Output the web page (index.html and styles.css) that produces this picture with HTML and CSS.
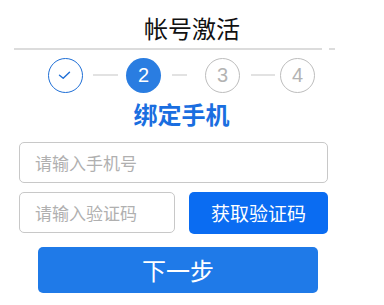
FILE: index.html
```html
<!DOCTYPE html>
<html lang="zh">
<head>
<meta charset="utf-8">
<link rel="stylesheet" href="styles.css">
</head>
<body>
<div class="page">
  <h1 class="title">帐号激活</h1>
  <div class="divider"><span class="rule"></span><span class="dash"></span></div>
  <div class="steps">
    <div class="step done">
      <svg class="check" width="35" height="35" viewBox="0 0 35 35"><polyline points="11.5,18.3 15.2,21.3 21.5,15.2" fill="none" stroke="#1f6fd6" stroke-width="1.4" stroke-linecap="round" stroke-linejoin="round"/></svg>
    </div>
    <div class="link l1"><span></span></div>
    <div class="step active">2</div>
    <div class="link l2"><span></span></div>
    <div class="step todo">3</div>
    <div class="link l3"><span></span></div>
    <div class="step todo">4</div>
  </div>
  <h2 class="subtitle">绑定手机</h2>
  <form class="form">
    <input class="field" type="text" placeholder="请输入手机号">
    <div class="row">
      <input class="field code" type="text" placeholder="请输入验证码">
      <button class="btn-code" type="button">获取验证码</button>
    </div>
    <button class="btn-next" type="button">下一步</button>
  </form>
</div>
</body>
</html>
```
FILE: styles.css
```css
* { box-sizing: border-box; }
html, body { margin: 0; padding: 0; background: #fff; }
body {
  font-family: "Noto Sans CJK SC", "Noto Sans", sans-serif;
  width: 384px;
  height: 305px;
  overflow: hidden;
}
.page { padding-top: 11px; }
.title {
  margin: 0;
  font-size: 24px;
  line-height: 34px;
  font-weight: 400;
  color: #111;
  text-align: center;
}
.divider {
  display: flex;
  margin-top: 3px;
  padding-left: 14px;
  gap: 7px;
  height: 1.5px;
}
.divider .rule { width: 308px; background: #dcdcdc; }
.divider .dash { width: 6px; background: #dcdcdc; }
.steps {
  display: flex;
  align-items: center;
  margin-top: 8px;
  padding-left: 48px;
  height: 35px;
}
.step {
  width: 35px;
  height: 35px;
  border-radius: 50%;
  display: flex;
  align-items: center;
  justify-content: center;
  font-family: "Liberation Sans", Arial, sans-serif;
  font-size: 20px;
  flex: none;
  position: relative;
}
.step.done { border: 1.3px solid #1f6fd6; }
.step.done .check { position: absolute; left: -1.3px; top: -1.3px; }
.step.active { background: #2a7de1; color: #fff; }
.step.todo { border: 1.3px solid #bdbdbd; color: #b3b3b3; }
.link { flex: none; display: flex; align-items: center; }
.link span { display: block; height: 1.3px; background: #e2e2e2; width: 100%; }
.l1 { width: 43px; padding: 0 8px 0 10px; }
.l2 { width: 44px; padding: 0 18px 0 11px; }
.l3 { width: 40px; padding: 0 5px 0 11px; }
.subtitle {
  margin: 6px 0 0;
  font-size: 24px;
  line-height: 30px;
  font-weight: 700;
  color: #1a6ee0;
  text-align: center;
  padding-right: 21px;
}
.form {
  margin: 13px 0 0 19px;
  width: 309px;
  display: flex;
  flex-direction: column;
}
.field {
  display: block;
  width: 100%;
  height: 41px;
  border: 1px solid #c8c8c8;
  border-radius: 5px;
  padding: 0 0 0 15px;
  font-family: "Noto Sans CJK SC", "Noto Sans", sans-serif;
  font-size: 17px;
  color: #333;
  outline: none;
  background: #fff;
}
.field::placeholder { color: #b0b0b0; }
.row {
  display: flex;
  gap: 14px;
  margin-top: 9px;
}
.field.code { width: 156px; flex: none; }
.btn-code {
  flex: 1;
  height: 42px;
  border: 0;
  border-radius: 5px;
  background: #0a6cf2;
  color: #fff;
  font-family: "Noto Sans CJK SC", "Noto Sans", sans-serif;
  font-size: 19px;
  padding: 0;
}
.btn-next {
  margin: 13px 0 0 19px;
  width: 280px;
  height: 46px;
  border: 0;
  border-radius: 5px;
  background: #1f7ae8;
  color: #fff;
  font-family: "Noto Sans CJK SC", "Noto Sans", sans-serif;
  font-size: 24px;
  padding: 0;
}
```
